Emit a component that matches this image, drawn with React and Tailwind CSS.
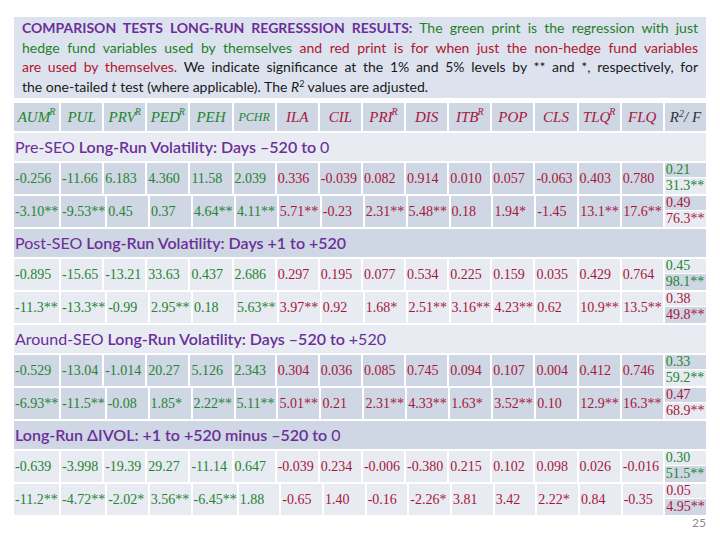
import React from 'react';

const GREEN = 'text-[#23852f]';
const RED = 'text-[#a7173b]';
const DARK = 'bg-[#cfd6e4]';
const LIGHT = 'bg-[#e8ebf2]';

const labels = [
  { t: 'AUM', sup: 'R', c: GREEN },
  { t: 'PUL', c: GREEN },
  { t: 'PRV', sup: 'R', c: GREEN },
  { t: 'PED', sup: 'R', c: GREEN },
  { t: 'PEH', c: GREEN },
  { t: 'PCHR', c: GREEN, small: true },
  { t: 'ILA', c: RED },
  { t: 'CIL', c: RED },
  { t: 'PRI', sup: 'R', c: RED },
  { t: 'DIS', c: RED },
  { t: 'ITB', sup: 'R', c: RED },
  { t: 'POP', c: RED },
  { t: 'CLS', c: RED },
  { t: 'TLQ', sup: 'R', c: RED },
  { t: 'FLQ', c: RED },
];

const sections = [
  {
    title: (
      <span>
        Pre-SEO<span className="font-semibold"> Long-Run Volatility: Days –520 to </span>0
      </span>
    ),
    titleBg: LIGHT,
    bg: DARK,
    r2bg: [DARK, LIGHT],
    rows: [
      { v: ['-0.256', '-11.66', '6.183', '4.360', '11.58', '2.039', '0.336', '-0.039', '0.082', '0.914', '0.010', '0.057', '-0.063', '0.403', '0.780'], r2: ['0.21', '31.3**'] },
      { v: ['-3.10**', '-9.53**', '0.45', '0.37', '4.64**', '4.11**', '5.71**', '-0.23', '2.31**', '5.48**', '0.18', '1.94*', '-1.45', '13.1**', '17.6**'], r2: ['0.49', '76.3**'] },
    ],
  },
  {
    title: (
      <span>
        Post-SEO<span className="font-semibold"> Long-Run Volatility: Days +1 to +520</span>
      </span>
    ),
    titleBg: DARK,
    bg: LIGHT,
    r2bg: [LIGHT, DARK],
    rows: [
      { v: ['-0.895', '-15.65', '-13.21', '33.63', '0.437', '2.686', '0.297', '0.195', '0.077', '0.534', '0.225', '0.159', '0.035', '0.429', '0.764'], r2: ['0.45', '98.1**'] },
      { v: ['-11.3**', '-13.3**', '-0.99', '2.95**', '0.18', '5.63**', '3.97**', '0.92', '1.68*', '2.51**', '3.16**', '4.23**', '0.62', '10.9**', '13.5**'], r2: ['0.38', '49.8**'] },
    ],
  },
  {
    title: (
      <span>
        Around-SEO<span className="font-semibold"> Long-Run Volatility: Days –520 to </span>+520
      </span>
    ),
    titleBg: LIGHT,
    bg: DARK,
    r2bg: [DARK, LIGHT],
    rows: [
      { v: ['-0.529', '-13.04', '-1.014', '20.27', '5.126', '2.343', '0.304', '0.036', '0.085', '0.745', '0.094', '0.107', '0.004', '0.412', '0.746'], r2: ['0.33', '59.2**'] },
      { v: ['-6.93**', '-11.5**', '-0.08', '1.85*', '2.22**', '5.11**', '5.01**', '0.21', '2.31**', '4.33**', '1.63*', '3.52**', '0.10', '12.9**', '16.3**'], r2: ['0.47', '68.9**'] },
    ],
  },
  {
    title: (
      <span>
        <span className="font-semibold">Long-Run ΔIVOL: +1 to +520 minus –520 to </span>0
      </span>
    ),
    titleBg: DARK,
    bg: LIGHT,
    r2bg: [LIGHT, DARK],
    rows: [
      { v: ['-0.639', '-3.998', '-19.39', '29.27', '-11.14', '0.647', '-0.039', '0.234', '-0.006', '-0.380', '0.215', '0.102', '0.098', '0.026', '-0.016'], r2: ['0.30', '51.5**'] },
      { v: ['-11.2**', '-4.72**', '-2.02*', '3.56**', '-6.45**', '1.88', '-0.65', '1.40', '-0.16', '-2.26*', '3.81', '3.42', '2.22*', '0.84', '-0.35'], r2: ['0.05', '4.95**'] },
    ],
  },
];

const serif = { fontFamily: '"Liberation Serif", "Times New Roman", serif' };
const sans = { fontFamily: 'Lato, "Open Sans", sans-serif' };

function DataRow({ row, idx, bg, r2bg }) {
  const r2Color = idx === 0 ? GREEN : RED;
  return (
    <div className="grid grid-cols-[45px_repeat(15,1fr)] gap-x-[2px] h-[31px]" style={serif}>
      {row.v.map((val, i) => (
        <div
          key={i}
          className={`${bg} ${i < 6 ? GREEN : RED} flex items-center pl-[1px] text-[14px] whitespace-nowrap`}
        >
          {val}
        </div>
      ))}
      <div className={`flex flex-col gap-[1px] ${r2Color} text-[14px]`}>
        <div className={`${r2bg[0]} flex-1 pl-[1px] leading-[14px]`}>{row.r2[0]}</div>
        <div className={`${r2bg[1]} flex-1 pl-[1px] leading-[16px]`}>{row.r2[1]}</div>
      </div>
    </div>
  );
}

export default function App() {
  return (
    <div className="w-[720px] h-[540px] bg-white pt-[17px] px-[14px] overflow-hidden">
      {/* Intro note */}
      <div
        className="bg-[#dde3ee] h-[81px] px-[8px] pt-[1px] text-[14px] leading-[19.5px] text-[#1a1a1a]"
        style={sans}
      >
        <div className="text-justify [text-align-last:justify] whitespace-nowrap">
          <span className="font-bold text-[#6b2f9a]">COMPARISON TESTS LONG-RUN REGRESSSION RESULTS:</span>
          <span className="text-[#1f7f2a]"> The green print is the regression with just</span>
        </div>
        <div className="text-justify [text-align-last:justify] whitespace-nowrap">
          <span className="text-[#1f7f2a]">hedge fund variables used by themselves</span>
          <span className="text-[#b0152f]"> and red print is for when just the non-hedge fund variables</span>
        </div>
        <div className="text-justify [text-align-last:justify] whitespace-nowrap">
          <span className="text-[#b0152f]">are used by themselves.</span>
          <span> We indicate significance at the 1% and 5% levels by ** and *, respectively, for</span>
        </div>
        <div className="whitespace-nowrap">
          the one-tailed <i>t</i> test (where applicable). The <i>R</i>
          <sup className="text-[9px]">2</sup> values are adjusted.
        </div>
      </div>

      {/* Table */}
      <div className="mt-[5px] flex flex-col gap-y-[2px]">
        <div className="grid grid-cols-[45px_repeat(15,1fr)] gap-x-[2px] h-[28px]" style={serif}>
          {labels.map((l) => (
            <div key={l.t} className={`${DARK} ${l.c} flex items-center justify-center italic whitespace-nowrap`}>
              <span className={l.small ? 'text-[12px]' : 'text-[15px]'}>{l.t}</span>
              {l.sup && <sup className="text-[10px] -ml-[1px]">{l.sup}</sup>}
            </div>
          ))}
          <div className={`${DARK} text-[#333] flex items-center justify-center italic text-[15px] whitespace-nowrap`}>
            <span>
              R<sup className="text-[10px]">2</sup>/ F
            </span>
          </div>
        </div>

        {sections.map((s, si) => (
          <React.Fragment key={si}>
            <div
              className={`${s.titleBg} h-[28px] flex items-center pl-[1px] text-[16px] text-[#6b2f9a] whitespace-nowrap`}
              style={sans}
            >
              {s.title}
            </div>
            {s.rows.map((row, ri) => (
              <DataRow key={ri} row={row} idx={ri} bg={s.bg} r2bg={s.r2bg} />
            ))}
          </React.Fragment>
        ))}
      </div>

      <div className="text-right text-[12px] text-[#8c8c8c] leading-none pt-[2px]" style={sans}>
        25
      </div>
    </div>
  );
}
